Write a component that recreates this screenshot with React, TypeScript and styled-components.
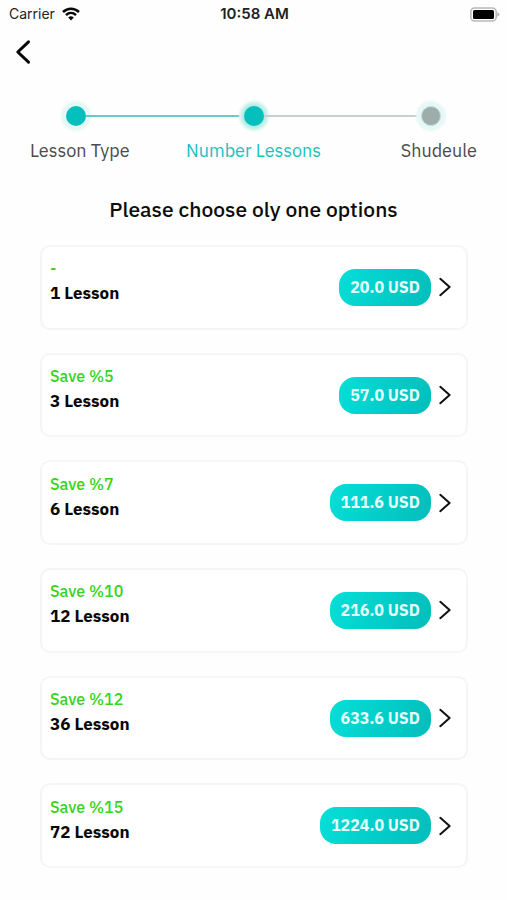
import React from "react";
import styled, { createGlobalStyle } from "styled-components";

const GlobalStyle = createGlobalStyle`
  *, *::before, *::after { box-sizing: border-box; }
  body {
    margin: 0;
    background: #fefefe;
    color: #0c0c0c;
    font-family: "IBM Plex Sans", Roboto, sans-serif;
  }
  button { font: inherit; color: inherit; border: 0; background: none; padding: 0; cursor: pointer; }
`;

const Screen = styled.div`
  display: flex;
  flex-direction: column;
  min-height: 100vh;
`;

const StatusBar = styled.div`
  display: grid;
  grid-template-columns: 1fr auto 1fr;
  align-items: center;
  height: 28px;
  padding: 0 7px 0 9px;
  font-family: Inter, sans-serif;
  font-size: 14px;
  line-height: 20px;
  color: #222;
`;

const Carrier = styled.div`
  display: flex;
  align-items: center;
  gap: 7px;
`;

const Clock = styled.time`
  font-size: 15px;
  font-weight: 600;
`;

const BatteryIcon = styled.svg`
  justify-self: end;
`;

const TopBar = styled.header`
  display: flex;
  padding: 8px 11px;
`;

const BackButton = styled.button`
  display: flex;
  width: 24px;
  height: 32px;
  align-items: center;
  justify-content: center;
`;

const Main = styled.main`
  display: flex;
  flex: 1;
  flex-direction: column;
  padding-bottom: 32px;
`;

const Track = styled.div`
  display: flex;
  align-items: center;
  padding: 30px 13% 0;
`;

const Dot = styled.span<{ $state: "done" | "current" | "todo" }>`
  width: 20px;
  height: 20px;
  border-radius: 50%;
  border: ${(p) => (p.$state === "todo" ? "1px solid #c3dcd8" : "0")};
  background: ${(p) => (p.$state === "todo" ? "#9eacaa" : "#04bfbc")};
  box-shadow: ${(p) =>
    p.$state === "current"
      ? "0 0 4px 2px #9ce6e0, 0 0 2px 5px #e4f8f5"
      : "0 0 2px 5px #e6f8f5"};
`;

const Line = styled.span<{ $done?: boolean }>`
  flex: 1;
  height: 2px;
  background: ${(p) => (p.$done ? "#66cbc9" : "#cccfcf")};
`;

const StepLabels = styled.ol`
  display: grid;
  grid-template-columns: 1fr auto 1fr;
  margin: 0;
  padding: 13px 30px 0;
  list-style: none;
  font-size: 18px;
  line-height: 24px;
`;

const StepLabel = styled.li<{ $active?: boolean }>`
  color: ${(p) => (p.$active ? "#20c0be" : "#4b4b4b")};
  &:last-child { text-align: right; }
`;

const Title = styled.h1`
  margin: 32px 16px 22px;
  font-size: 21px;
  line-height: 28px;
  font-weight: 500;
  text-align: center;
`;

const Options = styled.ul`
  display: flex;
  flex: 1;
  flex-direction: column;
  gap: 23px;
  margin: 0;
  padding: 0 39px 0 40px;
  list-style: none;
`;

const Option = styled.li`
  display: flex;
  flex: 1;
`;

const OptionCard = styled.button`
  display: flex;
  flex: 1;
  align-items: center;
  gap: 8px;
  min-height: 84px;
  padding: 0 15px 0 8px;
  border: 2px solid #f5f5f5;
  border-radius: 10px;
  background: #fff;
  text-align: left;
`;

const Details = styled.span`
  display: flex;
  flex: 1;
  flex-direction: column;
  padding-bottom: 12px;
  font-size: 17px;
  line-height: 25px;
`;

const Saving = styled.span`
  color: #35d31b;
  font-size: 16px;
  font-weight: 500;
`;

const Count = styled.span`
  color: #080808;
  font-weight: 700;
`;

const Price = styled.span`
  padding: 0 11px;
  border-radius: 16px;
  background: linear-gradient(110deg, #05dfd8, #03bdbb);
  color: #e6fffd;
  font-size: 16px;
  line-height: 37px;
  font-weight: 700;
`;

const options = [
  { saving: "-", count: "1 Lesson", price: "20.0 USD" },
  { saving: "Save %5", count: "3 Lesson", price: "57.0 USD" },
  { saving: "Save %7", count: "6 Lesson", price: "111.6 USD" },
  { saving: "Save %10", count: "12 Lesson", price: "216.0 USD" },
  { saving: "Save %12", count: "36 Lesson", price: "633.6 USD" },
  { saving: "Save %15", count: "72 Lesson", price: "1224.0 USD" },
];

export default function App() {
  return (
    <Screen>
      <GlobalStyle />
      <StatusBar>
        <Carrier>
          <span>Carrier</span>
          <svg width="18" height="14" viewBox="0 0 18 14" fill="none" stroke="#080808" strokeWidth="2.5" aria-label="Wi-Fi">
            <path d="M1 5C5.6 .5 12.4 .5 17 5M4 8.2C6.9 5.4 11.1 5.4 14 8.2" />
            <path d="M6.2 10.5Q9 8 11.8 10.5L9 13.4Z" fill="#080808" stroke="none" />
          </svg>
        </Carrier>
        <Clock>10:58 AM</Clock>
        <BatteryIcon width="31" height="15" viewBox="0 0 31 15" aria-label="Battery">
          <rect x="1.8" y="1" width="25.4" height="13" rx="4" fill="#fff" stroke="#b9b9b9" strokeWidth="1.6" />
          <rect x="4" y="3" width="21" height="9" rx="1.5" fill="#000" />
          <path d="M28.3 5.2Q30.6 6 30.6 7.5T28.3 9.8Z" fill="#b9b9b9" />
        </BatteryIcon>
      </StatusBar>
      <TopBar>
        <BackButton aria-label="Back">
          <svg width="16" height="26" viewBox="0 0 16 26" fill="none" stroke="#080808" strokeWidth="3" strokeLinecap="round" strokeLinejoin="round">
            <path d="M13.5 2.8L2.8 13L13.5 23.2" />
          </svg>
        </BackButton>
      </TopBar>
      <Main>
        <Track aria-hidden="true">
          <Dot $state="done" />
          <Line $done />
          <Dot $state="current" />
          <Line />
          <Dot $state="todo" />
        </Track>
        <StepLabels>
          <StepLabel>Lesson Type</StepLabel>
          <StepLabel $active aria-current="step">Number Lessons</StepLabel>
          <StepLabel>Shudeule</StepLabel>
        </StepLabels>
        <Title>Please choose oly one options</Title>
        <Options>
          {options.map((option) => (
            <Option key={option.count}>
              <OptionCard>
                <Details>
                  <Saving>{option.saving}</Saving>
                  <Count>{option.count}</Count>
                </Details>
                <Price>{option.price}</Price>
                <svg width="12" height="20" viewBox="0 0 12 20" fill="none" stroke="#111" strokeWidth="2" strokeLinecap="round" strokeLinejoin="round">
                  <path d="M1.3 1.8L10.6 10L1.3 18.2" />
                </svg>
              </OptionCard>
            </Option>
          ))}
        </Options>
      </Main>
    </Screen>
  );
}
